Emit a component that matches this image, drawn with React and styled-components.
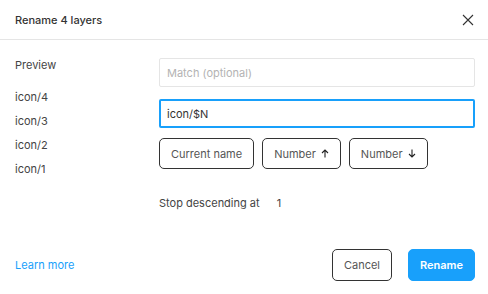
import styled, { createGlobalStyle } from "styled-components";

const GlobalStyle = createGlobalStyle`
  html, body {
    margin: 0;
    padding: 0;
    background: #ffffff;
  }
  body {
    font-family: Inter, "Noto Sans", sans-serif;
    font-size: 11px;
    color: #333333;
  }
`;

const Dialog = styled.div`
  width: 488px;
  height: 294px;
  display: flex;
  flex-direction: column;
  box-sizing: border-box;
`;

const Header = styled.div`
  height: 40px;
  box-sizing: border-box;
  display: flex;
  align-items: center;
  justify-content: space-between;
  padding: 0 12px 0 15px;
  border-bottom: 1px solid #e5e5e5;
`;

const Title = styled.div`
  font-size: 11px;
  font-weight: 500;
  color: #333;
`;

const CloseButton = styled.button`
  border: none;
  background: none;
  padding: 0;
  width: 16px;
  height: 16px;
  display: flex;
  align-items: center;
  justify-content: center;
  cursor: pointer;
`;

const Body = styled.div`
  flex: 1;
  display: grid;
  grid-template-columns: 144px 1fr;
  padding: 18px 13px 0 15px;
`;

const PreviewColumn = styled.div`
  display: flex;
  flex-direction: column;
`;

const PreviewLabel = styled.div`
  height: 15px;
  line-height: 15px;
  margin-bottom: 17px;
  color: #444;
`;

const PreviewItem = styled.div`
  height: 24px;
  line-height: 15px;
  color: #444;
`;

const Controls = styled.div`
  display: flex;
  flex-direction: column;
`;

const TextInput = styled.input`
  box-sizing: border-box;
  width: 100%;
  height: 29px;
  margin-bottom: ${(p) => p.$gap}px;
  border: ${(p) => (p.$focused ? "2px solid #18a0fb" : "1px solid #e5e5e5")};
  border-radius: 2px;
  padding: 0 ${(p) => (p.$focused ? "6px" : "7px")};
  font-family: Inter, "Noto Sans", sans-serif;
  font-size: 11px;
  color: #333;
  outline: none;
  caret-color: #000;
  &::placeholder {
    color: #b3b3b3;
  }
`;

const TokenRow = styled.div`
  display: flex;
  gap: 8px;
`;

const Token = styled.button`
  box-sizing: border-box;
  height: 31px;
  padding: 0 11px;
  border: 1px solid #333;
  border-radius: 5px;
  background: #fff;
  font-family: Inter, "Noto Sans", sans-serif;
  font-size: 11px;
  color: #555;
  display: flex;
  align-items: center;
  gap: 5px;
`;

const StopRow = styled.div`
  display: flex;
  gap: 17px;
  margin-top: 27px;
  color: #444;
  line-height: 15px;
`;

const Footer = styled.div`
  display: flex;
  align-items: center;
  justify-content: space-between;
  padding: 0 13px 13px 15px;
`;

const LearnMore = styled.a`
  color: #18a0fb;
  text-decoration: none;
  font-size: 11px;
`;

const Actions = styled.div`
  display: flex;
  gap: 16px;
`;

const FooterButton = styled.button`
  box-sizing: border-box;
  height: 32px;
  width: ${(p) => (p.$primary ? "67px" : "60px")};
  padding: 0;
  border-radius: 5px;
  font-family: Inter, "Noto Sans", sans-serif;
  font-size: 11px;
  font-weight: ${(p) => (p.$primary ? 600 : 400)};
  border: ${(p) => (p.$primary ? "1px solid #18a0fb" : "1px solid #333")};
  background: ${(p) => (p.$primary ? "#18a0fb" : "#fff")};
  color: ${(p) => (p.$primary ? "#fff" : "#555")};
`;

function Arrow({ up }) {
  return (
    <svg width="8" height="9" viewBox="0 0 8 9" fill="none">
      {up ? (
        <path d="M4 8.5V1M1 4l3-3 3 3" stroke="#222" strokeWidth="1.1" />
      ) : (
        <path d="M4 0.5V8M1 5l3 3 3-3" stroke="#222" strokeWidth="1.1" />
      )}
    </svg>
  );
}

export default function App() {
  const layers = ["icon/4", "icon/3", "icon/2", "icon/1"];

  return (
    <>
      <GlobalStyle />
      <Dialog>
        <Header>
          <Title>Rename 4 layers</Title>
          <CloseButton aria-label="Close">
            <svg width="12" height="12" viewBox="0 0 12 12" fill="none">
              <path d="M1 1l10 10M11 1L1 11" stroke="#333" strokeWidth="1.1" />
            </svg>
          </CloseButton>
        </Header>
        <Body>
          <PreviewColumn>
            <PreviewLabel>Preview</PreviewLabel>
            {layers.map((name) => (
              <PreviewItem key={name}>{name}</PreviewItem>
            ))}
          </PreviewColumn>
          <Controls>
            <TextInput placeholder="Match (optional)" $gap={12} readOnly />
            <TextInput defaultValue="icon/$N" $focused $gap={10} autoFocus />
            <TokenRow>
              <Token>Current name</Token>
              <Token>
                Number <Arrow up />
              </Token>
              <Token>
                Number <Arrow />
              </Token>
            </TokenRow>
            <StopRow>
              <span>Stop descending at</span>
              <span>1</span>
            </StopRow>
          </Controls>
        </Body>
        <Footer>
          <LearnMore href="#">Learn more</LearnMore>
          <Actions>
            <FooterButton>Cancel</FooterButton>
            <FooterButton $primary>Rename</FooterButton>
          </Actions>
        </Footer>
      </Dialog>
    </>
  );
}
